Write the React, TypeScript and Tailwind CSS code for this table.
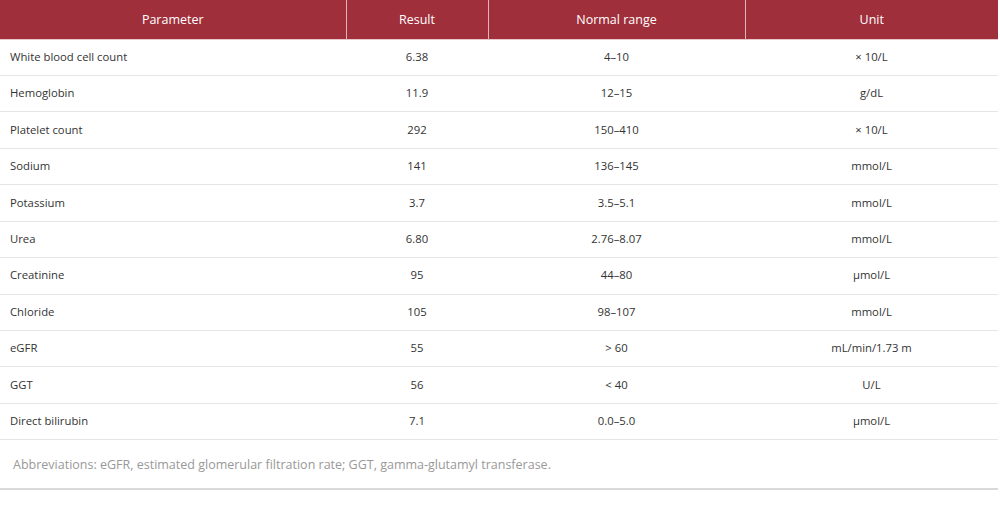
import React from 'react';

const rows = [
  ['White blood cell count', '6.38', '4–10', '× 10/L'],
  ['Hemoglobin', '11.9', '12–15', 'g/dL'],
  ['Platelet count', '292', '150–410', '× 10/L'],
  ['Sodium', '141', '136–145', 'mmol/L'],
  ['Potassium', '3.7', '3.5–5.1', 'mmol/L'],
  ['Urea', '6.80', '2.76–8.07', 'mmol/L'],
  ['Creatinine', '95', '44–80', 'µmol/L'],
  ['Chloride', '105', '98–107', 'mmol/L'],
  ['eGFR', '55', '> 60', 'mL/min/1.73 m'],
  ['GGT', '56', '< 40', 'U/L'],
  ['Direct bilirubin', '7.1', '0.0–5.0', 'µmol/L'],
];

export default function App() {
  return (
    <div className="w-[1000px] h-[532px] bg-white font-['Open_Sans',sans-serif] text-[#333]">
      <table className="w-[998px] border-collapse table-fixed">
        <colgroup>
          <col className="w-[346px]" />
          <col className="w-[142px]" />
          <col className="w-[257px]" />
          <col className="w-[253px]" />
        </colgroup>
        <thead>
          <tr className="bg-[#9f2f3b] text-white text-[12.5px] h-[39px] border-b border-[#e8c8cc]">
            <th className="font-normal pt-[2px] border-r border-[#e0b5ba]">Parameter</th>
            <th className="font-normal pt-[2px] border-r border-[#e0b5ba]">Result</th>
            <th className="font-normal pt-[2px] border-r border-[#e0b5ba]">Normal range</th>
            <th className="font-normal pt-[2px]">Unit</th>
          </tr>
        </thead>
        <tbody className="text-[11.3px]">
          {rows.map((r) => (
            <tr key={r[0]} className="h-[36.45px] border-b border-[#e6e6e6]">
              <td className="pl-[10px]">{r[0]}</td>
              <td className="text-center">{r[1]}</td>
              <td className="text-center">{r[2]}</td>
              <td className="text-center">{r[3]}</td>
            </tr>
          ))}
          <tr className="h-[49px] border-b-2 border-[#d9d9d9]">
            <td colSpan={4} className="pl-[13px] pt-[2px] text-[12.5px] text-[#999]">
              Abbreviations: eGFR, estimated glomerular filtration rate; GGT, gamma-glutamyl transferase.
            </td>
          </tr>
        </tbody>
      </table>
    </div>
  );
}
